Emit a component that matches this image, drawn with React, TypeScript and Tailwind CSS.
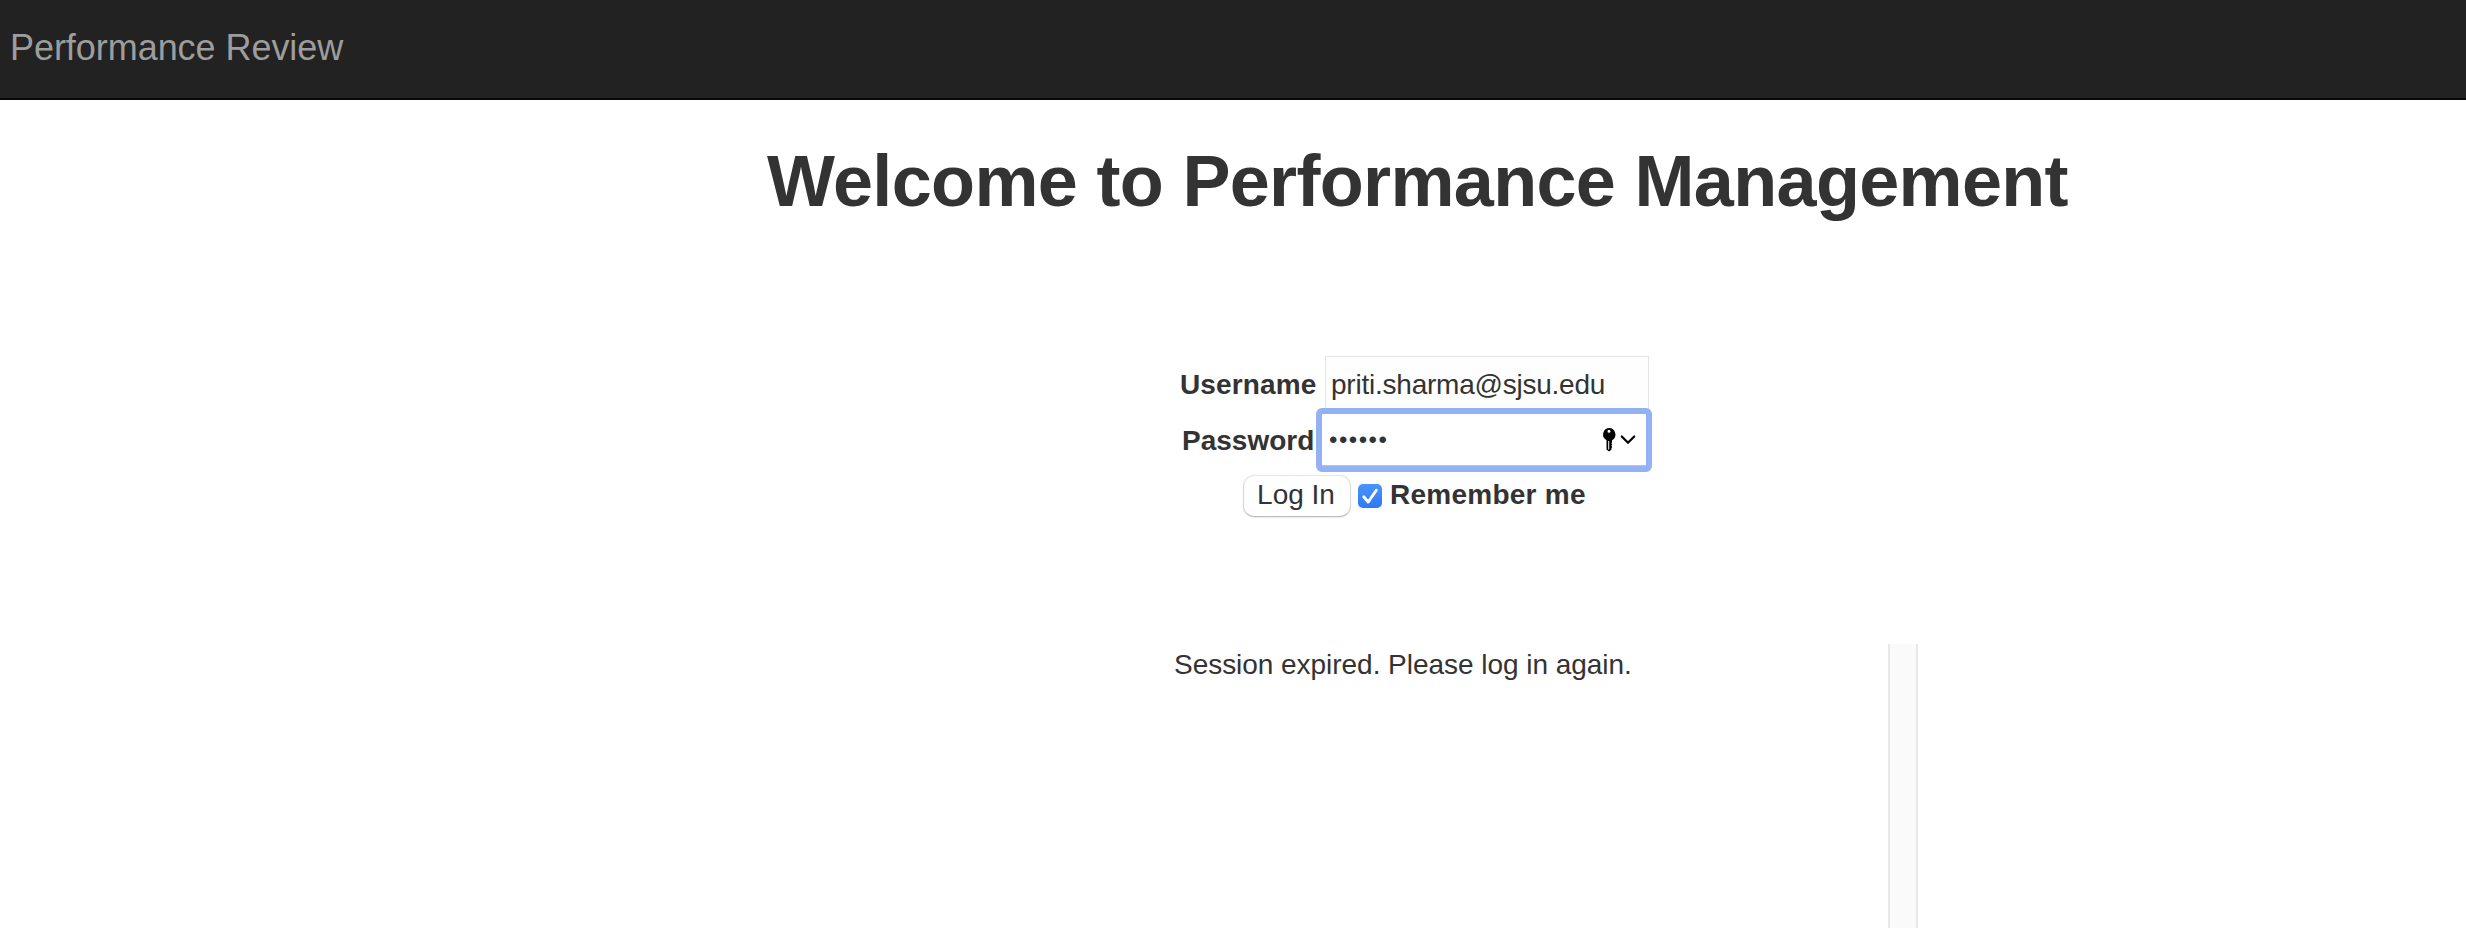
import React from "react";

function KeyIcon() {
  return (
    <svg width="14" height="26" viewBox="0 0 14 26" aria-hidden="true">
      <path
        fillRule="evenodd"
        fill="#000"
        d="M7 1a6.500 6.500 0 0 1 3 12.200v2l-.6 1 .8 1.200-.8 1.300.8 1.300-.8 1.200v1.500L7 24.400 4.500 22.500V13.200A6.500 6.500 0 0 1 7 1ZM7 2.800a1.500 1.500 0 1 0 0 3 1.500 1.500 0 0 0 0-3ZM6.200 14v8.500h1V14Z"
      />
    </svg>
  );
}

function ChevronIcon() {
  return (
    <svg width="16" height="12" viewBox="0 0 16 12" fill="none" aria-hidden="true">
      <path d="M1.800 2.500 8 8.700 14.200 2.500" stroke="#000" strokeWidth="2.300" strokeLinecap="round" strokeLinejoin="round" />
    </svg>
  );
}

function Checkbox() {
  return (
    <span className="flex h-6 w-6 items-center justify-center rounded-[5px] bg-linear-to-b from-[#4a94fb] to-[#2e78f6]">
      <svg width="24" height="24" viewBox="0 0 24 24" fill="none" aria-hidden="true">
        <path d="M5.800 12.800 10.200 18 18.300 6.200" stroke="#fff" strokeWidth="2.900" strokeLinecap="round" strokeLinejoin="round" />
      </svg>
    </span>
  );
}

export default function App() {
  return (
    <div className="flex h-[928px] w-full flex-col overflow-hidden bg-white font-['Liberation_Sans',sans-serif] text-[28px] leading-8 text-[#333]">
      <nav className="h-[100px] shrink-0 border-b-2 border-[#080808] bg-[#222] pt-7 pl-2.5">
        <a className="block text-[36px] leading-10 tracking-[-0.05px] text-[#9d9d9d]">Performance Review</a>
      </nav>

      <h1 className="mt-[41px] ml-[767px] h-20 shrink-0 text-[72px] leading-20 font-bold tracking-[-0.67px] whitespace-nowrap">
        Welcome to Performance Management
      </h1>

      <form className="mt-[135px] ml-[1179px] w-[500px] shrink-0">
        <div className="flex h-[54px] items-center">
          <label className="w-[146px] shrink-0 pt-[3px] pl-px font-bold tracking-[0.12px]">Username</label>
          <div className="flex h-[54px] w-[324px] items-center border border-[#e4e4e4] bg-[#fefefe] pt-[3px] pl-[5px] tracking-[-0.23px]">
            priti.sharma@sjsu.edu
          </div>
        </div>

        <div className="relative -mt-0.5 flex h-16 items-center">
          <label className="w-[137px] shrink-0 pt-0.5 pl-[3px] font-bold">Password</label>
          <div className="flex h-16 w-[336px] items-center rounded-[6px] border-6 border-[#94b1f3] bg-[#94b1f3]">
            <div className="flex h-[52px] w-full items-center border-b border-[#c4c4c4] bg-white pr-2.5 pl-[7px]">
              <span className="text-[24px] tracking-[1.5px]">••••••</span>
              <span className="ml-auto flex items-center gap-1">
                <KeyIcon />
                <ChevronIcon />
              </span>
            </div>
          </div>
        </div>

        <div className="mt-1 flex h-10 pl-[65px]">
          <button
            type="button"
            className="h-10 w-[106px] rounded-[10px] bg-white pr-0.5 pb-[3px] leading-9 shadow-[0_0_1px_1px_rgba(0,0,0,0.1),0_1px_2px_rgba(0,0,0,0.25)]"
          >
            Log In
          </button>
          <div className="ml-2 flex h-10 items-start pt-2">
            <Checkbox />
            <label className="-mt-[5px] ml-2 font-bold tracking-[0.25px]">Remember me</label>
          </div>
        </div>
      </form>

      <div className="mt-32 ml-[1174px] flex flex-1 items-stretch">
        <p className="w-[714px] pt-[5px] tracking-[-0.04px]">Session expired. Please log in again.</p>
        <div className="w-[30px] border-x-2 border-[#e8e8e8] bg-[#fafafa]" />
      </div>
    </div>
  );
}
